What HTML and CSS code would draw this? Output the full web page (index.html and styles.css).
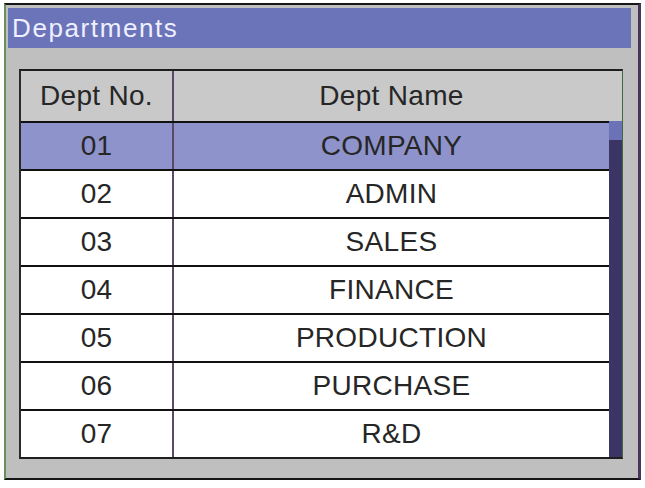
FILE: index.html
```html
<!DOCTYPE html>
<html lang="en">
<head>
    <meta charset="UTF-8">
    <title>Departments</title>
    <link rel="stylesheet" href="styles.css">
</head>
<body>
    <div class="window">
        <div class="title">Departments</div>

        <div class="grid">
            <div class="grid-head">
                <div class="cell no">Dept No.</div>
                <div class="cell name">Dept Name</div>
            </div>

            <div class="grid-body">
                <div class="rows">
                    <div class="row selected"><div class="cell no">01</div><div class="cell name">COMPANY</div></div>
                    <div class="row"><div class="cell no">02</div><div class="cell name">ADMIN</div></div>
                    <div class="row"><div class="cell no">03</div><div class="cell name">SALES</div></div>
                    <div class="row"><div class="cell no">04</div><div class="cell name">FINANCE</div></div>
                    <div class="row"><div class="cell no">05</div><div class="cell name">PRODUCTION</div></div>
                    <div class="row"><div class="cell no">06</div><div class="cell name">PURCHASE</div></div>
                    <div class="row"><div class="cell no">07</div><div class="cell name">R&amp;D</div></div>
                </div>
                <!-- vertical scrollbar -->
                <div class="scrollbar"><div class="thumb"></div></div>
            </div>
        </div>
    </div>
</body>
</html>
```

FILE: styles.css
```css
body {
    margin: 0;
    background-color: #ffffff;
    font-family: "Liberation Sans", Arial, sans-serif;
}

.window {
    box-sizing: border-box;
    width: 637px;
    height: 477px;
    margin: 3px 0 0 4px;
    padding: 3px 7px 0 2px;
    background-color: #bfbfbf;
    border: 2px solid #161616;
    border-left-color: #6a8f5c;
    border-right: 3px solid #4a3458;
}

.title {
    height: 40px;
    line-height: 40px;
    padding-left: 4px;
    font-size: 26px;
    letter-spacing: 1.6px;
    color: #eef0ff;
    background-color: #6b74b9;
}

.grid {
    box-sizing: border-box;
    width: 604px;
    margin: 21px 0 0 11px;
    border-top: 2px solid #1e1e1e;
    border-left: 2px solid #2a2a2a;
    border-right: 1px solid #3f6b3a;
    border-bottom: 2px solid #1e1e1e;
    background-color: #ffffff;
}

.grid-head {
    display: flex;
    height: 50px;
    background-color: #c9c9c9;
}

.cell {
    display: flex;
    align-items: center;
    justify-content: center;
    font-size: 28px;
    letter-spacing: 0.3px;
    color: #262626;
}

.cell.no {
    box-sizing: border-box;
    width: 153px;
    border-right: 2px solid #5b4a66;
}

.cell.name {
    width: 435px;
}

.grid-body {
    display: flex;
}

.rows {
    width: 588px;
}

.row {
    display: flex;
    height: 46px;
    border-top: 2px solid #111111;
}

.row .cell {
    height: 46px;
}

.row.selected {
    background-color: #8e93cb;
}

.scrollbar {
    width: 13px;
    background-color: #3b3566;
}

.thumb {
    height: 19px;
    background-color: #6b72b8;
}
```
